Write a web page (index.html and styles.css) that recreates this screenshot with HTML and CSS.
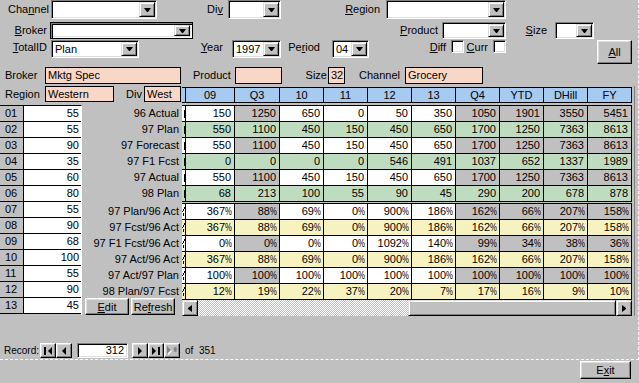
FILE: index.html
```html
<!DOCTYPE html>
<html lang="en">
<head>
<meta charset="utf-8">
<title>Plan Form</title>
<link rel="stylesheet" href="styles.css">
</head>
<body>
<div class="form">
  <div class="filters">
    <div class="frow r1">
      <span class="lbl w-channel">Cha<u>n</u>nel</span>
      <div class="combo cb-channel"><span class="val"></span><span class="dd"></span></div>
      <span class="lbl w-div">Di<u>v</u></span>
      <div class="combo cb-div"><span class="val"></span><span class="dd"></span></div>
      <span class="lbl w-region"><u>R</u>egion</span>
      <div class="combo cb-region"><span class="val"></span><span class="dd"></span></div>
    </div>
    <div class="frow r2">
      <span class="lbl w-broker"><u>B</u>roker</span>
      <div class="combo focus cb-broker"><span class="val"></span><span class="dd"></span></div>
      <span class="lbl w-product"><u>P</u>roduct</span>
      <div class="combo cb-product"><span class="val"></span><span class="dd"></span></div>
      <span class="lbl w-size"><u>S</u>ize</span>
      <div class="combo cb-size"><span class="val"></span><span class="dd"></span></div>
    </div>
    <div class="frow r3">
      <span class="lbl w-total"><u>T</u>otalID</span>
      <div class="combo cb-total"><span class="val">Plan</span><span class="dd"></span></div>
      <span class="lbl w-year"><u>Y</u>ear</span>
      <div class="combo cb-year"><span class="val">1997</span><span class="dd"></span></div>
      <span class="lbl w-period">Pe<u>r</u>iod</span>
      <div class="combo cb-period"><span class="val">04</span><span class="dd"></span></div>
      <span class="lbl w-diff"><u>D</u>iff</span>
      <span class="chk"></span>
      <span class="lbl w-curr"><u>C</u>urr</span>
      <span class="chk"></span>
      <span class="btn btn-all"><u>A</u>ll</span>
    </div>
  </div>

  <div class="sec2">
    <div class="rowA">
      <span class="lbl2 la-broker">Broker</span>
      <span class="fld fa-broker">Mktg Spec</span>
      <span class="lbl2 la-product">Product</span>
      <span class="fld fa-product"></span>
      <span class="lbl2 la-size">Size</span>
      <span class="fld fa-size">32</span>
      <span class="lbl2 la-channel">Channel</span>
      <span class="fld fa-channel">Grocery</span>
    </div>

    <div class="lower">
      <div class="leftcol">
        <div class="rowB">
          <span class="lbl2 lb-region">Region</span>
          <span class="fld fb-region">Western</span>
          <span class="lbl2 lb-div">Div</span>
          <span class="fld fb-div">West</span>
        </div>
        <div class="leftbody">
          <div class="lgrid">
            <div class="lrow"><span class="lnum">01</span><span class="lval">55</span></div>
            <div class="lrow"><span class="lnum">02</span><span class="lval">55</span></div>
            <div class="lrow"><span class="lnum">03</span><span class="lval">90</span></div>
            <div class="lrow"><span class="lnum">04</span><span class="lval">35</span></div>
            <div class="lrow"><span class="lnum">05</span><span class="lval">60</span></div>
            <div class="lrow"><span class="lnum">06</span><span class="lval">80</span></div>
            <div class="lrow"><span class="lnum">07</span><span class="lval">55</span></div>
            <div class="lrow"><span class="lnum">08</span><span class="lval">90</span></div>
            <div class="lrow"><span class="lnum">09</span><span class="lval">68</span></div>
            <div class="lrow"><span class="lnum">10</span><span class="lval">100</span></div>
            <div class="lrow"><span class="lnum">11</span><span class="lval">55</span></div>
            <div class="lrow"><span class="lnum">12</span><span class="lval">90</span></div>
            <div class="lrow"><span class="lnum">13</span><span class="lval">45</span></div>
          </div>
          <div class="labels">
            <div class="lab">96 Actual</div>
            <div class="lab">97 Plan</div>
            <div class="lab">97 Forecast</div>
            <div class="lab">97 F1 Fcst</div>
            <div class="lab">97 Actual</div>
            <div class="lab">98 Plan</div>
            <div class="labgap"></div>
            <div class="lab">97 Plan/96 Act</div>
            <div class="lab">97 Fcst/96 Act</div>
            <div class="lab">97 F1 Fcst/96 Act</div>
            <div class="lab">97 Act/96 Act</div>
            <div class="lab">97 Act/97 Plan</div>
            <div class="lab">98 Plan/97 Fcst</div>
            <div class="btnrow">
              <span class="btn btn-edit"><u>E</u>dit</span>
              <span class="btn btn-ref">Re<u>f</u>resh</span>
            </div>
          </div>
        </div>
      </div>

      <div class="sheet">
        <div class="shead cols">
          <span class="hc"></span><span class="hc">09</span><span class="hc">Q3</span><span class="hc">10</span><span class="hc">11</span><span class="hc">12</span><span class="hc">13</span><span class="hc">Q4</span><span class="hc">YTD</span><span class="hc">DHill</span><span class="hc">FY</span>
        </div>
        <div class="block blockA">
          <div class="drow cols white"><span class="c s n"></span><span class="c">150</span><span class="c">1250</span><span class="c">650</span><span class="c">0</span><span class="c">50</span><span class="c">350</span><span class="c">1050</span><span class="c">1901</span><span class="c">3550</span><span class="c">5451</span></div>
          <div class="drow cols green"><span class="c s n"></span><span class="c">550</span><span class="c">1100</span><span class="c">450</span><span class="c">150</span><span class="c">450</span><span class="c">650</span><span class="c">1700</span><span class="c">1250</span><span class="c">7363</span><span class="c">8613</span></div>
          <div class="drow cols white"><span class="c s n"></span><span class="c">550</span><span class="c">1100</span><span class="c">450</span><span class="c">150</span><span class="c">450</span><span class="c">650</span><span class="c">1700</span><span class="c">1250</span><span class="c">7363</span><span class="c">8613</span></div>
          <div class="drow cols green"><span class="c s n"></span><span class="c">0</span><span class="c">0</span><span class="c">0</span><span class="c">0</span><span class="c">546</span><span class="c">491</span><span class="c">1037</span><span class="c">652</span><span class="c">1337</span><span class="c">1989</span></div>
          <div class="drow cols white"><span class="c s n"></span><span class="c">550</span><span class="c">1100</span><span class="c">450</span><span class="c">150</span><span class="c">450</span><span class="c">650</span><span class="c">1700</span><span class="c">1250</span><span class="c">7363</span><span class="c">8613</span></div>
          <div class="drow cols green"><span class="c s n"></span><span class="c">68</span><span class="c">213</span><span class="c">100</span><span class="c">55</span><span class="c">90</span><span class="c">45</span><span class="c">290</span><span class="c">200</span><span class="c">678</span><span class="c">878</span></div>
        </div>
        <div class="block blockB">
          <div class="drow cols white"><span class="c s"><svg class="frag" width="3" height="9" viewBox="0 0 3 9"><path d="M2 0h1v2h-1zM1 2h1v2h-1zM0 4h1v1h-1zM1 6h1v3h-1z"/></svg></span><span class="c">367<span class="p">%</span></span><span class="c">88<span class="p">%</span></span><span class="c">69<span class="p">%</span></span><span class="c">0<span class="p">%</span></span><span class="c">900<span class="p">%</span></span><span class="c">186<span class="p">%</span></span><span class="c">162<span class="p">%</span></span><span class="c">66<span class="p">%</span></span><span class="c">207<span class="p">%</span></span><span class="c">158<span class="p">%</span></span></div>
          <div class="drow cols yellow"><span class="c s"><svg class="frag" width="3" height="9" viewBox="0 0 3 9"><path d="M2 0h1v2h-1zM1 2h1v2h-1zM0 4h1v1h-1zM1 6h1v3h-1z"/></svg></span><span class="c">367<span class="p">%</span></span><span class="c">88<span class="p">%</span></span><span class="c">69<span class="p">%</span></span><span class="c">0<span class="p">%</span></span><span class="c">900<span class="p">%</span></span><span class="c">186<span class="p">%</span></span><span class="c">162<span class="p">%</span></span><span class="c">66<span class="p">%</span></span><span class="c">207<span class="p">%</span></span><span class="c">158<span class="p">%</span></span></div>
          <div class="drow cols white"><span class="c s"><svg class="frag" width="3" height="9" viewBox="0 0 3 9"><path d="M2 0h1v2h-1zM1 2h1v2h-1zM0 4h1v1h-1zM1 6h1v3h-1z"/></svg></span><span class="c">0<span class="p">%</span></span><span class="c">0<span class="p">%</span></span><span class="c">0<span class="p">%</span></span><span class="c">0<span class="p">%</span></span><span class="c">1092<span class="p">%</span></span><span class="c">140<span class="p">%</span></span><span class="c">99<span class="p">%</span></span><span class="c">34<span class="p">%</span></span><span class="c">38<span class="p">%</span></span><span class="c">36<span class="p">%</span></span></div>
          <div class="drow cols yellow"><span class="c s"><svg class="frag" width="3" height="9" viewBox="0 0 3 9"><path d="M2 0h1v2h-1zM1 2h1v2h-1zM0 4h1v1h-1zM1 6h1v3h-1z"/></svg></span><span class="c">367<span class="p">%</span></span><span class="c">88<span class="p">%</span></span><span class="c">69<span class="p">%</span></span><span class="c">0<span class="p">%</span></span><span class="c">900<span class="p">%</span></span><span class="c">186<span class="p">%</span></span><span class="c">162<span class="p">%</span></span><span class="c">66<span class="p">%</span></span><span class="c">207<span class="p">%</span></span><span class="c">158<span class="p">%</span></span></div>
          <div class="drow cols white"><span class="c s"><svg class="frag" width="3" height="9" viewBox="0 0 3 9"><path d="M2 0h1v2h-1zM1 2h1v2h-1zM0 4h1v1h-1zM1 6h1v3h-1z"/></svg></span><span class="c">100<span class="p">%</span></span><span class="c">100<span class="p">%</span></span><span class="c">100<span class="p">%</span></span><span class="c">100<span class="p">%</span></span><span class="c">100<span class="p">%</span></span><span class="c">100<span class="p">%</span></span><span class="c">100<span class="p">%</span></span><span class="c">100<span class="p">%</span></span><span class="c">100<span class="p">%</span></span><span class="c">100<span class="p">%</span></span></div>
          <div class="drow cols yellow"><span class="c s"><svg class="frag" width="3" height="9" viewBox="0 0 3 9"><path d="M2 0h1v2h-1zM1 2h1v2h-1zM0 4h1v1h-1zM1 6h1v3h-1z"/></svg></span><span class="c">12<span class="p">%</span></span><span class="c">19<span class="p">%</span></span><span class="c">22<span class="p">%</span></span><span class="c">37<span class="p">%</span></span><span class="c">20<span class="p">%</span></span><span class="c">7<span class="p">%</span></span><span class="c">17<span class="p">%</span></span><span class="c">16<span class="p">%</span></span><span class="c">9<span class="p">%</span></span><span class="c">10<span class="p">%</span></span></div>
        </div>
        <div class="hscroll">
          <span class="sb-btn sb-left"></span>
          <span class="sb-track"></span>
          <span class="sb-thumb"></span>
          <span class="sb-btn sb-right"></span>
        </div>
      </div>
      <div class="vstrip"></div>
    </div>
  </div>

  <div class="status">
    <span class="rec-lbl">Record:</span>
    <span class="nb nb-first"><svg width="8" height="8" viewBox="0 0 8 8"><rect x="0" y="0" width="2" height="8"/><path d="M8 0V8L4 4Z"/></svg></span>
    <span class="nb"><svg width="8" height="8" viewBox="0 0 8 8"><path d="M6 0V8L2 4Z"/></svg></span>
    <span class="recbox">312</span>
    <span class="nb nb-next"><svg width="8" height="8" viewBox="0 0 8 8"><path d="M2 0V8L6 4Z"/></svg></span>
    <span class="nb"><svg width="8" height="8" viewBox="0 0 8 8"><path d="M0 0V8L4 4Z"/><rect x="6" y="0" width="2" height="8"/></svg></span>
    <span class="nb nb-new"><svg width="11" height="9" viewBox="0 0 11 9"><path d="M1 1V9L5 5Z" fill="#fff"/><path d="M0 0V8L4 4Z" fill="#808080"/><path d="M7 1.5L9.5 5.5M9.5 1.5L7 5.5M8.25 1V6M6.5 3.5H10" stroke="#808080" stroke-width="1" fill="none"/></svg></span>
    <span class="of-lbl">of&nbsp;&nbsp;351</span>
  </div>
</div>
<div class="footer">
  <span class="btn btn-exit">E<u>x</u>it</span>
</div>
</body>
</html>
```
FILE: styles.css
```css
* { box-sizing: border-box; }
html, body { margin: 0; padding: 0; }
body {
  width: 639px;
  height: 383px;
  overflow: hidden;
  background: #c0c0c0;
  font-family: "Liberation Sans", Arial, sans-serif;
  font-size: 11px;
  color: #000;
}
u { text-decoration: underline; text-underline-offset: 1px; }

.form {
  height: 360px;
  display: flex;
  flex-direction: column;
  border-bottom: 1px dashed #fff;
  border-right: 1px dashed #fff;
}

/* ---------- filter area ---------- */
.filters { height: 64px; flex: none; }
.frow { display: flex; align-items: center; }
.r1 { height: 19px; }
.r2 { height: 17px; margin-top: 3px; }
.r3 { height: 24px; margin-top: 1px; align-items: flex-start; }
.lbl { flex: none; text-align: right; white-space: nowrap; line-height: 13px; }
.r3 .lbl { margin-top: 1px; }

.combo {
  flex: none;
  height: 100%;
  display: flex;
  background: #fff;
  border: 1px solid;
  border-color: #808080 #fff #fff #808080;
  box-shadow: inset 1px 1px #000, inset -1px -1px #dfdfdf;
  padding: 1px;
}
.r3 .combo { height: 18px; }
.combo .val { flex: 1; padding-left: 2px; line-height: 14px; overflow: hidden; white-space: nowrap; }
.combo.focus {
  border-color: #000;
  box-shadow: inset 1px 1px #808080, inset 2px 2px #000, inset -1px -1px #fff, inset -2px -2px #dfdfdf;
  padding: 2px;
}
.dd {
  flex: none;
  width: 16px;
  height: 100%;
  background: #c0c0c0;
  border: 1px solid;
  border-color: #dfdfdf #000 #000 #dfdfdf;
  box-shadow: inset 1px 1px #fff, inset -1px -1px #808080;
  display: flex;
  align-items: center;
  justify-content: center;
}
.dd::after {
  content: "";
  width: 1px;
  height: 0;
  border-top: 4px solid #000;
  border-left: 3px solid transparent;
  border-right: 3px solid transparent;
}

.w-channel { width: 49px; }
.cb-channel { margin-left: 2px; width: 106px; }
.w-div { width: 66px; }
.cb-div { margin-left: 5px; width: 53px; }
.w-region { width: 99px; }
.cb-region { margin-left: 6px; width: 120px; }

.w-broker { width: 47px; }
.cb-broker { margin-left: 3px; width: 143px; }
.w-product { width: 245px; }
.cb-product { margin-left: 4px; width: 64px; }
.w-size { width: 41px; }
.cb-size { margin-left: 8px; width: 39px; }

.w-total { width: 47px; }
.cb-total { margin-left: 4px; width: 88px; }
.w-year { width: 84px; }
.cb-year { margin-left: 9px; width: 49px; }
.w-period { width: 39px; }
.cb-period { margin-left: 12px; width: 37px; }
.w-diff { width: 77px; }
.w-curr { width: 24px; }

.chk {
  flex: none;
  margin-left: 5px;
  width: 13px;
  height: 13px;
  background: #fff;
  border: 1px solid;
  border-color: #808080 #fff #fff #808080;
  box-shadow: inset 1px 1px #000, inset -1px -1px #dfdfdf;
}

.btn {
  flex: none;
  background: #c0c0c0;
  border: 1px solid;
  border-color: #fff #000 #000 #fff;
  box-shadow: inset -1px -1px #808080, inset 1px 1px #dfdfdf;
  display: flex;
  align-items: center;
  justify-content: center;
  white-space: nowrap;
}
.btn-all { margin-left: 91px; width: 35px; height: 24px; }

/* ---------- header fields ---------- */
.sec2 { flex: none; }
.rowA { display: flex; height: 17px; margin-top: 3px; }
.lbl2 { flex: none; white-space: nowrap; line-height: 17px; }
.fld {
  flex: none;
  background: #f9d7c7;
  border: 1px solid #000;
  padding-left: 2px;
  line-height: 15px;
  white-space: nowrap;
  overflow: hidden;
}
.la-broker { width: 45px; padding-left: 5px; }
.fa-broker { width: 136px; }
.la-product { width: 54px; padding-left: 12px; }
.fa-product { width: 47px; }
.la-size { width: 46px; text-align: right; padding-right: 1px; }
.fa-size { width: 17px; }
.la-channel { width: 60px; text-align: right; padding-right: 5px; }
.fa-channel { width: 78px; }

.lower { display: flex; margin-top: 2px; }
.leftcol { width: 182px; flex: none; }
.rowB { display: flex; height: 16px; }
.rowB .lbl2 { line-height: 16px; }
.rowB .fld { line-height: 14px; }
.lb-region { width: 45px; padding-left: 5px; }
.fb-region { width: 69px; }
.lb-div { width: 30px; text-align: right; padding-right: 2px; }
.fb-div { width: 37px; }

.leftbody { display: flex; margin-top: 3px; }
.lgrid { width: 82px; flex: none; border-top: 1px solid #000; border-right: 1px solid #fff; }
.lrow { display: flex; height: 16px; border-bottom: 1px solid #000; }
.lnum { width: 24px; flex: none; padding-left: 5px; border-right: 1px solid #000; line-height: 15px; }
.lval { flex: 1; background: #fff; text-align: right; padding-right: 2px; line-height: 15px; }

.labels { width: 100px; flex: none; display: flex; flex-direction: column; }
.lab { height: 16px; line-height: 16px; text-align: right; padding-right: 3px; white-space: nowrap; }
.labgap { height: 2px; }
.btnrow { display: flex; gap: 2px; margin-top: -1px; padding-left: 3px; }
.btn-edit, .btn-ref { width: 44px; height: 17px; }

/* ---------- datasheet ---------- */
.sheet { width: 450px; flex: none; }
.cols > :nth-child(1) { width: 4px; }
.cols > :nth-child(2) { width: 49px; }
.cols > :nth-child(3) { width: 45px; }
.cols > :nth-child(n+4) { width: 44px; }

.shead {
  display: flex;
  height: 16px;
  margin-top: 1px;
  background: #a6caf0;
  border-top: 1px solid #000;
  border-bottom: 1px solid #000;
}
.hc { flex: none; border-right: 1px solid #000; text-align: center; line-height: 14px; overflow: hidden; }

.blockA { margin-top: 2px; border-top: 1px solid #000; }
.blockB { margin-top: 1px; border-top: 1px solid #000; }
.drow { display: flex; height: 16px; border-bottom: 1px solid #000; }
.c {
  flex: none;
  border-right: 1px solid #000;
  text-align: right;
  padding-right: 3px;
  line-height: 15px;
  white-space: nowrap;
  overflow: hidden;
}
.p {
  display: inline-block;
  width: 6px;
  text-align: left;
  transform: scaleX(0.7);
  transform-origin: 0 50%;
}
.c.s { display: flex; justify-content: flex-end; align-items: center; padding-right: 0; }
.c.n::before { content: ""; width: 1px; height: 8px; background: #000; }
.frag { display: block; }
.green > .c { background: #c0dcc0; }
.yellow > .c { background: #f7f3c1; }
.white > .c { background: #fff; }
.white > .c:nth-child(3), .white > .c:nth-child(n+8) { background: #c0c0c0; }

.hscroll { display: flex; height: 16px; }
.sb-btn, .sb-thumb {
  flex: none;
  background: #c0c0c0;
  border: 1px solid;
  border-color: #dfdfdf #000 #000 #dfdfdf;
  box-shadow: inset 1px 1px #fff, inset -1px -1px #808080;
}
.sb-btn { width: 16px; display: flex; align-items: center; justify-content: center; }
.sb-left::after, .sb-right::after {
  content: "";
  width: 0;
  height: 1px;
  border-top: 3px solid transparent;
  border-bottom: 3px solid transparent;
}
.sb-left::after { border-right: 4px solid #000; }
.sb-right::after { border-left: 4px solid #000; }
.sb-track {
  flex: 1;
  background-color: #fff;
  background-image: repeating-conic-gradient(#c0c0c0 0 25%, #fff 0 50%);
  background-size: 2px 2px;
}
.sb-thumb { width: 208px; }
.vstrip {
  flex: none;
  width: 1px;
  margin-left: 2px;
  background: #808080;
}

/* ---------- record navigation ---------- */
.status {
  margin-top: auto;
  margin-bottom: 1px;
  display: flex;
  align-items: center;
  height: 15px;
  font-size: 10px;
}
.rec-lbl { width: 40px; padding-left: 4px; white-space: nowrap; }
.nb {
  flex: none;
  width: 16px;
  height: 15px;
  background: #c0c0c0;
  border: 1px solid;
  border-color: #fff #000 #000 #fff;
  box-shadow: inset -1px -1px #808080, inset 1px 1px #dfdfdf;
  display: flex;
  align-items: center;
  justify-content: center;
}
.nb svg { display: block; }
.recbox {
  flex: none;
  margin-left: 5px;
  width: 51px;
  height: 15px;
  background: #fff;
  border: 1px solid;
  border-color: #808080 #fff #fff #808080;
  box-shadow: inset 1px 1px #000, inset -1px -1px #dfdfdf;
  text-align: right;
  padding-right: 3px;
  line-height: 13px;
  font-size: 11px;
}
.nb-next { margin-left: 4px; }
.of-lbl { margin-left: 5px; white-space: nowrap; }

.footer { display: flex; justify-content: flex-end; padding-right: 8px; margin-top: 1px; }
.btn-exit { width: 51px; height: 18px; }
```
